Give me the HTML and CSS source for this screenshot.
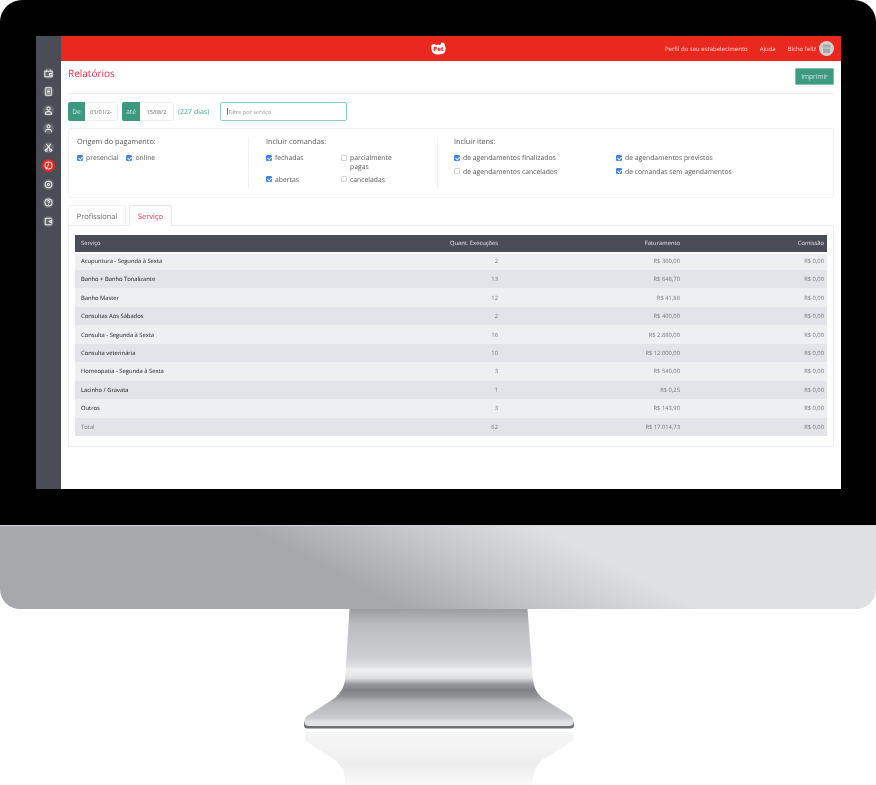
FILE: index.html
```html
<!DOCTYPE html>
<html lang="pt-BR">
  <head>
    <meta charset="utf-8" />
    <title>Relatórios</title>
    <link rel="stylesheet" href="styles.css">
  </head>
  <body>
    <div class="monitor">
      <div class="bezel">
        <div class="screen">
          <aside class="sidebar">
            <a class="side-item"><svg viewBox="0 0 12 12"><path d="M2 3.500h8v6H2z M7 6h3v2H7z M4 2v2M8 2v2"/></svg></a>
            <a class="side-item"><svg viewBox="0 0 12 12"><path d="M3 2h6v8H3z M4.500 4.300h3M4.500 6h3M4.500 7.700h3"/></svg></a>
            <a class="side-item"><svg viewBox="0 0 12 12"><circle cx="6" cy="4" r="1.800"/><path d="M2.600 10c0-2.200 1.400-3 3.400-3s3.400.8 3.400 3z"/></svg></a>
            <a class="side-item"><svg viewBox="0 0 12 12"><circle cx="6" cy="3.800" r="1.700"/><path d="M2.500 10l1.200-3h4.600l1.200 3"/></svg></a>
            <a class="side-item"><svg viewBox="0 0 12 12"><path d="M3.500 2l4.500 6M8.500 2L4 8"/><circle cx="3.500" cy="9" r="1.200"/><circle cx="8.500" cy="9" r="1.200"/></svg></a>
            <a class="side-item side-active"><svg viewBox="0 0 12 12"><circle cx="6" cy="6" r="3.800"/><path d="M6.400 3.600L5 7.400L3.400 8.600"/></svg></a>
            <a class="side-item"><svg viewBox="0 0 12 12"><circle cx="6" cy="6" r="3.600"/><circle cx="6" cy="6" r="1.200"/></svg></a>
            <a class="side-item"><svg viewBox="0 0 12 12"><circle cx="6" cy="6" r="3.800"/><path d="M4.800 5c0-1.600 2.400-1.600 2.400 0 0 .9-1.200 1-1.200 1.800M6 8v.6"/></svg></a>
            <a class="side-item"><svg viewBox="0 0 12 12"><path d="M9.500 2.500h-7v7h7M9.500 4.200L6.600 6l2.900 1.800z"/></svg></a>
          </aside>
          <div class="app">
            <header class="topbar">
              <div class="logo">
                <svg viewBox="0 0 15 15">
                  <path class="logo-head" d="M.6 4l2.900-1.200 1.500 1.300 2.500-.6L9 4.200l1.500-2.700 2.700.6L14 5c1 2.200.8 5-.7 6.800-1.600 2-9 2.400-11 .4C.6 10.500-.2 6.800.6 4z"/>
                  <text class="logo-text" x="7.500" y="10.400">Pet</text>
                </svg>
              </div>
              <nav class="topnav">
                <a>Perfil do seu estabelecimento</a>
                <a>Ajuda</a>
                <a>Bicho feliz</a>
                <span class="avatar"><svg viewBox="0 0 15 15"><path d="M4 3.500h7l.8 3H3.200z"/><path d="M4 7.500h7V12H4z"/></svg></span>
              </nav>
            </header>
            <main class="content">
              <div class="page-head">
                <h1>Relatórios</h1>
                <button class="print-btn">Imprimir</button>
              </div>
              <div class="date-row">
                <div class="date-group"><span class="date-tag">De</span><span class="date-value">01/01/2-</span></div>
                <div class="date-group"><span class="date-tag">até</span><span class="date-value">15/08/2</span></div>
                <span class="days">(227 dias)</span>
                <div class="search"><i class="caret"></i>Filtre por serviço</div>
              </div>
              <section class="filters">
                <div class="filter-col">
                  <h2>Origem do pagamento:</h2>
                  <div class="inline-checks">
                    <label class="check"><span class="box on"></span>presencial</label>
                    <label class="check"><span class="box on"></span>online</label>
                  </div>
                </div>
                <div class="filter-col">
                  <h2>Incluir comandas:</h2>
                  <div class="check-grid check-grid-comandas">
                    <label class="check"><span class="box on"></span>fechadas</label>
                    <label class="check check-wrap"><span class="box"></span>parcialmente<br>pagas</label>
                    <label class="check"><span class="box on"></span>abertas</label>
                    <label class="check"><span class="box"></span>canceladas</label>
                  </div>
                </div>
                <div class="filter-col filter-col-last">
                  <h2>Incluir itens:</h2>
                  <div class="check-grid check-grid-itens">
                    <label class="check"><span class="box on"></span>de agendamentos finalizados</label>
                    <label class="check"><span class="box on"></span>de agendamentos previstos</label>
                    <label class="check"><span class="box"></span>de agendamentos cancelados</label>
                    <label class="check"><span class="box on"></span>de comandas sem agendamentos</label>
                  </div>
                </div>
              </section>
              <div class="tabs">
                <a class="tab">Profissional</a>
                <a class="tab tab-active">Serviço</a>
              </div>
              <section class="panel">
                <table class="report">
                  <colgroup><col class="col-name"><col class="col-qty"><col class="col-money"><col class="col-fee"></colgroup>
                  <thead>
                    <tr><th>Serviço</th><th class="num">Quant. Execuções</th><th class="num">Faturamento</th><th class="num">Comissão</th></tr>
                  </thead>
                  <tbody>
                    <tr><td>Acupuntura - Segunda à Sexta</td><td class="num">2</td><td class="num">R$ 360,00</td><td class="num">R$ 0,00</td></tr>
                    <tr><td>Banho + Banho Tonalizante</td><td class="num">13</td><td class="num">R$ 648,70</td><td class="num">R$ 0,00</td></tr>
                    <tr><td>Banho Master</td><td class="num">12</td><td class="num">R$ 41,88</td><td class="num">R$ 0,00</td></tr>
                    <tr><td>Consultas Aos Sábados</td><td class="num">2</td><td class="num">R$ 400,00</td><td class="num">R$ 0,00</td></tr>
                    <tr><td>Consulta - Segunda à Sexta</td><td class="num">16</td><td class="num">R$ 2.880,00</td><td class="num">R$ 0,00</td></tr>
                    <tr><td>Consulta veterinária</td><td class="num">10</td><td class="num">R$ 12.000,00</td><td class="num">R$ 0,00</td></tr>
                    <tr><td>Homeopatia - Segunda à Sexta</td><td class="num">3</td><td class="num">R$ 540,00</td><td class="num">R$ 0,00</td></tr>
                    <tr><td>Lacinho / Gravata</td><td class="num">1</td><td class="num">R$ 0,25</td><td class="num">R$ 0,00</td></tr>
                    <tr><td>Outros</td><td class="num">3</td><td class="num">R$ 143,90</td><td class="num">R$ 0,00</td></tr>
                    <tr class="total"><td>Total</td><td class="num">62</td><td class="num">R$ 17.014,73</td><td class="num">R$ 0,00</td></tr>
                  </tbody>
                </table>
              </section>
            </main>
          </div>
        </div>
      </div>
      <div class="chin"></div>
      <svg class="stand" viewBox="300 609 277 176">
        <defs>
          <linearGradient id="neck" gradientUnits="userSpaceOnUse" x1="0" y1="609" x2="0" y2="726">
            <stop offset="0" stop-color="#9c9da0"/>
            <stop offset=".137" stop-color="#bcbdc0"/>
            <stop offset=".41" stop-color="#ccced1"/>
            <stop offset=".48" stop-color="#dcdde0"/>
            <stop offset=".52" stop-color="#eff0f1"/>
            <stop offset=".59" stop-color="#e0e1e2"/>
            <stop offset=".64" stop-color="#9a9b9e"/>
            <stop offset=".69" stop-color="#808184"/>
            <stop offset=".74" stop-color="#8f9093"/>
            <stop offset=".8" stop-color="#b5b6b9"/>
            <stop offset=".93" stop-color="#c9cacd"/>
            <stop offset=".96" stop-color="#e0e1e2"/>
            <stop offset="1" stop-color="#e4e5e6"/>
          </linearGradient>
          <linearGradient id="mirror" gradientUnits="userSpaceOnUse" x1="0" y1="726" x2="0" y2="672">
            <stop offset="0" stop-color="#f5f5f6"/>
            <stop offset=".3" stop-color="#f3f3f4"/>
            <stop offset=".6" stop-color="#ededee"/>
            <stop offset="1" stop-color="#fbfbfb"/>
          </linearGradient>
        </defs>
        <g transform="translate(0 1458) scale(1 -1)">
          <path fill="url(#mirror)" d="M349.500 609H527.500L533 680C534 688 537 693 542 698L571 716Q573.500 718 573.500 721V723Q573 726 569 726H309Q305 726 304.500 723V721Q304.500 718 307 716L335 698C340 693 344 688 345 680Z"/>
        </g>
        <rect x="304" y="720" width="270" height="8.500" rx="3.500" fill="#6f6f71"/>
        <path fill="url(#neck)" d="M349.500 609H527.500L533 680C534 688 537 693 542 698L571 716Q573.500 718 573.500 721V723Q573 726 569 726H309Q305 726 304.500 723V721Q304.500 718 307 716L335 698C340 693 344 688 345 680Z"/>
      </svg>
    </div>
  </body>
</html>
```

FILE: styles.css
```css
* {
  box-sizing: border-box;
}

body {
  margin: 0;
  background-color: #fff;
  font-family: "Open Sans", sans-serif;
  text-rendering: geometricPrecision;
}

.monitor {
  width: 876px;
}

.bezel {
  height: 525px;
  padding: 36px 35px 36px 36px;
  background-color: #000;
  border-radius: 22px 22px 0 0;
}

.screen {
  display: flex;
  height: 453px;
  background-color: #fff;
  overflow: hidden;
  filter: blur(0.35px);
}

.sidebar {
  display: flex;
  flex-direction: column;
  align-items: center;
  gap: 7.500px;
  flex: none;
  width: 25px;
  padding-top: 31.500px;
  background-color: #4a4d55;
}

.side-item {
  display: flex;
  width: 11px;
  height: 11px;
  border-radius: 50%;
  background-color: #666970;
}

.side-item svg {
  width: 11px;
  height: 11px;
  fill: none;
  stroke: #f0f0f0;
  stroke-width: 1.100;
}

.side-active {
  background-color: #ea2620;
  box-shadow: 0 0 0 1px #ea2620;
}

.app {
  flex: 1;
  min-width: 0;
  display: flex;
  flex-direction: column;
}

.topbar {
  position: relative;
  flex: none;
  display: flex;
  justify-content: flex-end;
  align-items: center;
  height: 25px;
  padding-right: 7px;
  background-color: #e9281f;
}

.logo {
  position: absolute;
  left: 370px;
  top: 5px;
  width: 15px;
  height: 15px;
}

.logo svg {
  display: block;
}

.logo-head {
  fill: #fff;
}

.logo-text {
  font-size: 6px;
  font-weight: 800;
  fill: #e9281f;
  text-anchor: middle;
}

.topnav {
  display: flex;
  align-items: center;
  font-size: 6px;
  color: #ffd5d3;
}

.topnav a {
  margin-right: 12px;
}

.topnav a:nth-child(3) {
  margin-right: 3px;
}

.avatar {
  width: 15px;
  height: 15px;
  border-radius: 50%;
  background-color: #cfd1d3;
}

.avatar svg {
  display: block;
  fill: #a6a8ab;
}

.content {
  flex: 1;
  padding: 0 7px;
}

.page-head {
  display: flex;
  justify-content: space-between;
  align-items: flex-start;
  height: 33px;
  padding-top: 7px;
  border-bottom: 1px solid #f0f0f0;
}

.page-head h1 {
  margin: 0;
  font-size: 10px;
  font-weight: 400;
  line-height: 11px;
  color: #f0284a;
}

.print-btn {
  width: 39px;
  height: 17px;
  padding: 0;
  border: 1px solid #7cc4b0;
  border-radius: 1px;
  background-color: #3d9a80;
  font-family: inherit;
  font-size: 6.500px;
  color: #cdeae2;
}

.date-row {
  display: flex;
  align-items: center;
  height: 19px;
  margin-top: 8px;
}

.date-group {
  display: flex;
  align-items: stretch;
  height: 19px;
  margin-right: 4px;
  border: 1px solid #f0f0f0;
  border-radius: 2px;
  font-size: 5.500px;
}

.date-tag {
  display: flex;
  align-items: center;
  justify-content: center;
  width: 17px;
  margin: -1px 0 -1px -1px;
  border-radius: 2px 0 0 2px;
  background-color: #3d9a80;
  font-size: 6.500px;
  color: #cdeae2;
}

.date-group:nth-child(2) .date-tag {
  width: 18px;
}

.date-value {
  display: flex;
  align-items: center;
  justify-content: center;
  width: 32px;
  color: #666;
}

.date-group:nth-child(2) .date-value {
  width: 33px;
}

.days {
  flex: none;
  width: 31px;
  margin: 1px 0 0;
  font-size: 7px;
  color: #45b096;
  white-space: nowrap;
}

.search {
  display: flex;
  align-items: center;
  width: 127px;
  height: 19px;
  margin-left: 11px;
  padding-left: 6px;
  border: 1px solid #8ed0c0;
  border-radius: 2px;
  font-size: 5.500px;
  color: #9a9a9a;
}

.caret {
  width: 1px;
  height: 7px;
  margin-right: 0.500px;
  background-color: #777;
}

.filters {
  display: grid;
  grid-template-columns: 180px 189px 1fr;
  height: 70px;
  margin-top: 7px;
  padding: 8px 0 9px;
  border: 1px solid #f3f3f3;
  border-radius: 2px;
}

.filter-col {
  padding-left: 8px;
  border-right: 1px solid #f2f2f2;
  font-size: 6.800px;
  color: #555;
}

.filter-col + .filter-col {
  padding-left: 17px;
}

.filter-col + .filter-col-last {
  padding-left: 16px;
  border-right: 0;
}

.filter-col h2 {
  margin: 0;
  font-size: 7.300px;
  font-weight: 400;
  line-height: 10px;
  color: #555;
}

.inline-checks {
  display: flex;
  gap: 8px;
  margin-top: 6px;
}

.check {
  display: flex;
  align-items: center;
  gap: 3px;
  line-height: 9px;
  white-space: nowrap;
}

.check-wrap {
  align-items: flex-start;
  gap: 3px;
}

.check-wrap .box {
  margin-top: 1.500px;
}

.box {
  position: relative;
  flex: none;
  width: 6px;
  height: 6px;
  border: 1px solid #d4d4d4;
  border-radius: 1px;
  background-color: #fff;
}

.box.on {
  border-color: #3f84ea;
  background-color: #3f84ea;
}

.box.on::after {
  content: "";
  position: absolute;
  left: 0.800px;
  top: 0;
  width: 2px;
  height: 3.200px;
  border-right: 1px solid #fff;
  border-bottom: 1px solid #fff;
  transform: rotate(40deg);
}

.check-grid {
  display: grid;
  align-items: start;
  margin-top: 6px;
}

.check-grid-comandas {
  grid-template-columns: 75px 1fr;
  row-gap: 3.500px;
}

.check-grid-itens {
  grid-template-columns: 162px 1fr;
  row-gap: 4.500px;
}

.tabs {
  display: flex;
  gap: 3px;
  height: 21px;
  margin-top: 7px;
  margin-bottom: -1px;
  position: relative;
}

.tab {
  display: flex;
  align-items: center;
  justify-content: center;
  height: 20px;
  width: 58px;
  padding-top: 2px;
  border: 1px solid #f2f2f2;
  border-bottom: 0;
  border-radius: 2px 2px 0 0;
  font-size: 7.500px;
  color: #666;
}

.tab-active {
  width: 43px;
  height: 21px;
  border: 1px solid #e8e8e8;
  border-bottom: 0;
  background-color: #fff;
  color: #f0284a;
}

.panel {
  height: 222px;
  padding: 9px 6px 0;
  border: 1px solid #ececec;
  border-radius: 2px;
}

.report {
  width: 100%;
  table-layout: fixed;
  border-collapse: collapse;
  font-size: 5.800px;
  color: #111;
}

.col-name {
  width: 300px;
}

.col-qty {
  width: 126px;
}

.col-money {
  width: 182px;
}

.report th {
  height: 18px;
  padding: 0 6px 2px;
  border-bottom: 2px solid #fff;
  background-color: #4a4d55;
  background-clip: padding-box;
  font-weight: 400;
  text-align: left;
  color: #e4e5e7;
}

.report td {
  height: 18.450px;
  padding: 0 6px;
  background-color: #eeeff1;
}

.report tbody tr:first-child td {
  height: 17px;
  padding-bottom: 2px;
}

.report tbody tr:nth-child(even) td {
  background-color: #e2e4e9;
}

.report th.num,
.report td.num {
  padding-right: 3px;
  text-align: right;
}

.report td.num {
  color: #777;
}

.report .total td {
  color: #777;
}

.chin {
  height: 84px;
  border-top: 1.500px solid #d4d4d6;
  border-radius: 0 0 20px 20px;
  background: linear-gradient(27deg, #a7a8ab 184px, #c4c5c8 250px, #dfe0e2 318px);
}

.stand {
  display: block;
  width: 277px;
  height: 176px;
  margin-left: 300px;
}
```
